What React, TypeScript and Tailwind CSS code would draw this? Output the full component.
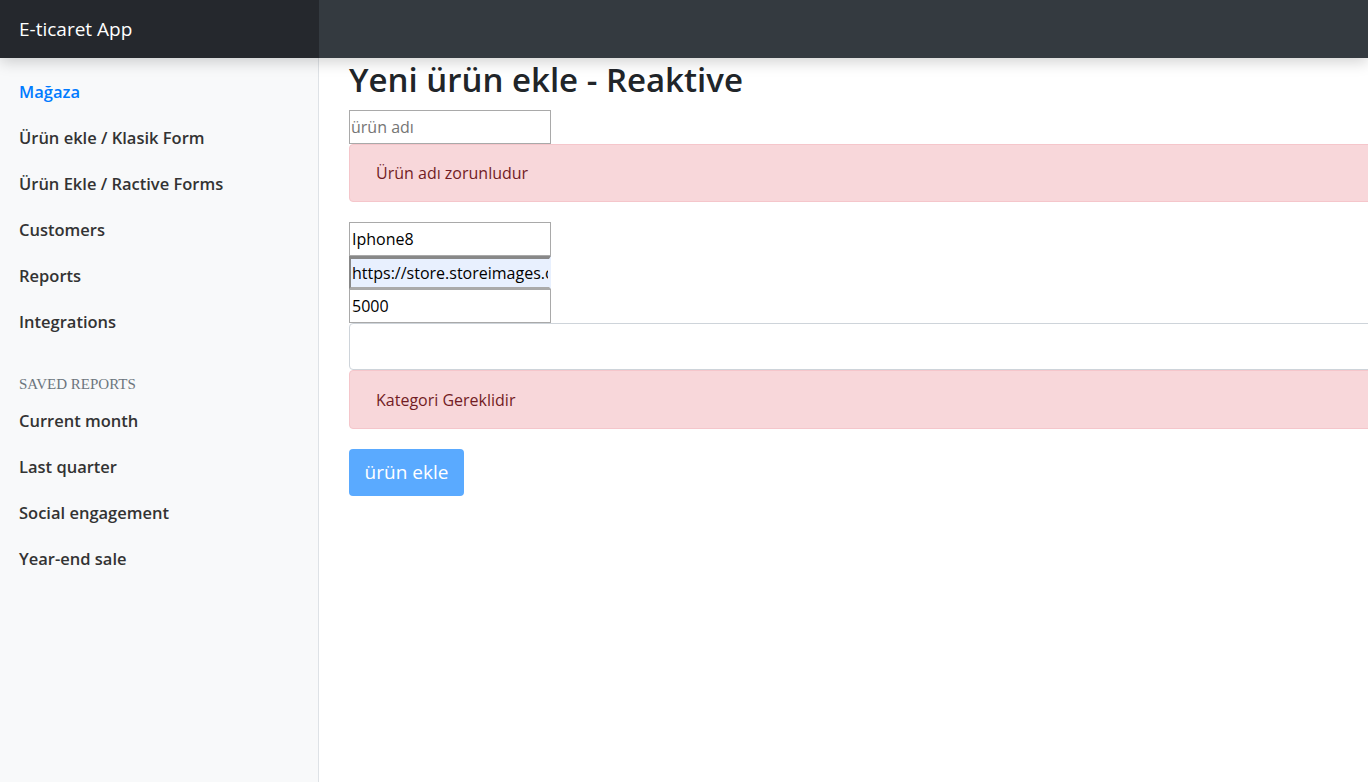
const sideLinks = ["Ürün ekle / Klasik Form", "Ürün Ekle / Ractive Forms", "Customers", "Reports", "Integrations"];
const savedReports = ["Current month", "Last quarter", "Social engagement", "Year-end sale"];

const font = { fontFamily: '"Open Sans", "Noto Sans", sans-serif' };

export default function App() {
  return (
    <div className="h-[782px] w-[1368px] overflow-hidden bg-white text-[#212529]" style={font}>
      {/* Navbar */}
      <nav className="relative z-10 flex h-[58px] bg-[#343a40] shadow-[0_4px_14px_rgba(0,0,0,0.18)]">
        <div className="flex w-[319px] items-center bg-[#25282d] pl-[19px] text-[19px] text-white">
          E-ticaret App
        </div>
      </nav>

      <div className="flex h-[724px]">
        {/* Sidebar */}
        <aside className="w-[319px] shrink-0 border-r border-[#dee2e6] bg-[#f8f9fa] pt-[11px]">
          <ul className="flex flex-col">
            <li className="flex h-[46px] items-center px-[19px] text-[16.5px] font-semibold text-[#007bff]">Mağaza</li>
            {sideLinks.map((l) => (
              <li key={l} className="flex h-[46px] items-center px-[19px] text-[16.5px] font-semibold text-[#333]">
                {l}
              </li>
            ))}
          </ul>
          <h6
            className="mt-[28px] mb-[3px] px-[19px] text-[15px] uppercase text-[#6c757d]"
            style={{ fontFamily: '"Liberation Serif", serif' }}
          >
            Saved reports
          </h6>
          <ul className="flex flex-col">
            {savedReports.map((l) => (
              <li key={l} className="flex h-[46px] items-center px-[19px] text-[16.5px] font-semibold text-[#333]">
                {l}
              </li>
            ))}
          </ul>
        </aside>

        {/* Main */}
        <main className="min-w-0 flex-1 pl-[30px]">
          <h2 className="mb-[8px] h-[44px] text-[33px] font-semibold leading-[44px]">Yeni ürün ekle - Reaktive</h2>
          <form className="flex w-[1100px] flex-col">
            <input
              className="h-[34px] w-[202px] border border-[#a9a9a9] px-[1px] text-[16px] outline-none placeholder:text-[#757575]"
              placeholder="ürün adı"
            />
            <div className="flex h-[58px] items-center rounded-[4px] border border-[#f5c6cb] bg-[#f8d7da] px-[26px] text-[16px] text-[#721c24]">
              Ürün adı zorunludur
            </div>
            <input
              className="mt-[20px] h-[34px] w-[202px] border border-[#a9a9a9] px-[2px] text-[16px] text-black outline-none"
              defaultValue="Iphone8"
            />
            <input
              className="h-[33px] w-[202px] border-2 border-t-[3px] border-[#888] border-r-[#e8f0fe] border-b-[#aaa] bg-[#e8f0fe] px-[1px] text-[16px] text-black outline-none"
              defaultValue="https://store.storeimages.cdn-apple.com/iphone8"
            />
            <input
              className="h-[34px] w-[202px] border border-[#a9a9a9] px-[2px] text-[16px] text-black outline-none"
              defaultValue="5000"
            />
            <div className="h-[47px] rounded-[4px] border border-[#ced4da] bg-white" />
            <div className="flex h-[59px] items-center rounded-[4px] border border-[#f5c6cb] bg-[#f8d7da] px-[26px] text-[16px] text-[#721c24]">
              Kategori Gereklidir
            </div>
            <div className="mt-[20px]">
              <button
                type="button"
                className="h-[47px] w-[115px] rounded-[4px] bg-[#5aaaff] text-[19px] text-white"
              >
                ürün ekle
              </button>
            </div>
          </form>
        </main>
      </div>
    </div>
  );
}
